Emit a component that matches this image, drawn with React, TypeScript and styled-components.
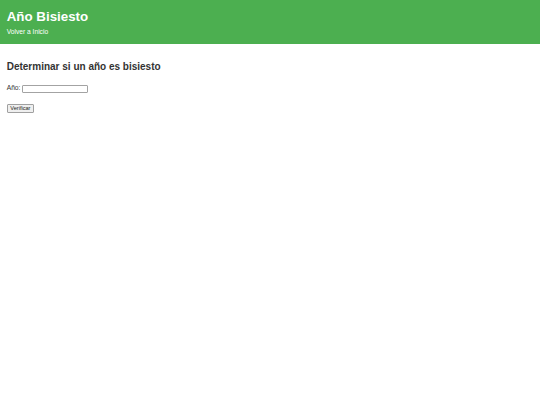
import React, { useState } from 'react';
import styled, { createGlobalStyle } from 'styled-components';

const GlobalStyle = createGlobalStyle`
  html, body {
    margin: 0;
    padding: 0;
    background-color: #fff;
    font-family: "Liberation Sans", Arial, sans-serif;
  }
`;

const Header = styled.header`
  background-color: #4caf50;
  color: #fff;
  padding: 9.4px 6.7px 8.4px;
`;

const Title = styled.h1`
  margin: 0 0 3.2px;
  font-size: 13.33px;
  font-weight: bold;
  line-height: 15px;
`;

const HomeLink = styled.a`
  display: block;
  color: #fff;
  font-size: 6.67px;
  line-height: 8px;
  text-decoration: none;
`;

const Main = styled.main`
  padding: 17px 6.7px 0;
  color: #333;
`;

const Heading = styled.h2`
  margin: 0 0 10.7px;
  font-size: 10px;
  font-weight: bold;
  line-height: 12px;
`;

const Form = styled.form`
  display: flex;
  flex-direction: column;
  align-items: flex-start;
  gap: 10.6px;
`;

const Row = styled.div`
  display: flex;
  align-items: flex-start;
  gap: 1.6px;
`;

const Label = styled.label`
  font-size: 6.67px;
  line-height: 8px;
`;

const YearInput = styled.input`
  box-sizing: border-box;
  width: 66.5px;
  height: 8.7px;
  margin: 1px 0 0;
  padding: 0 1px;
  border: 1px solid #a3a3a3;
  border-radius: 1px;
  background: #fff;
  font-family: "Liberation Sans", Arial, sans-serif;
  font-size: 5.56px;
  outline: none;
`;

const Button = styled.button`
  box-sizing: border-box;
  height: 9.4px;
  margin: 0;
  padding: 0 2.6px;
  border: 1px solid #a0a0a0;
  border-radius: 1px;
  background-color: #efefef;
  color: #222;
  font-family: "Liberation Sans", Arial, sans-serif;
  font-size: 5.6px;
  line-height: 1;
  cursor: pointer;
`;

const Result = styled.p`
  margin: 0;
  font-size: 6.67px;
`;

export default function App() {
  const [year, setYear] = useState('');
  const [result, setResult] = useState<string | null>(null);

  const check = (e: React.FormEvent) => {
    e.preventDefault();
    const y = parseInt(year, 10);
    if (isNaN(y)) {
      setResult('Ingrese un año válido.');
      return;
    }
    const leap = (y % 4 === 0 && y % 100 !== 0) || y % 400 === 0;
    setResult(leap ? `${y} es bisiesto.` : `${y} no es bisiesto.`);
  };

  return (
    <>
      <GlobalStyle />
      <Header>
        <Title>Año Bisiesto</Title>
        <HomeLink href="#">Volver a Inicio</HomeLink>
      </Header>
      <Main>
        <Heading>Determinar si un año es bisiesto</Heading>
        <Form onSubmit={check}>
          <Row>
            <Label htmlFor="year">Año:</Label>
            <YearInput id="year" type="text" value={year} onChange={(e) => setYear(e.target.value)} />
          </Row>
          <Button type="submit">Verificar</Button>
          {result && <Result>{result}</Result>}
        </Form>
      </Main>
    </>
  );
}
